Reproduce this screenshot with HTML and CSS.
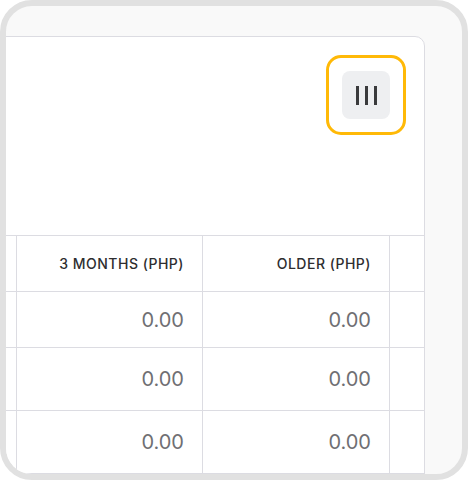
FILE: index.html
```html
<!DOCTYPE html>
<html>
<head>
<meta charset="utf-8">
<link rel="stylesheet" href="styles.css">
</head>
<body>
<div class="frame">
  <div class="card">
    <div class="card-head">
      <div class="col-toggle">
        <button class="col-btn" aria-label="Columns">
          <span class="bar"></span><span class="bar"></span><span class="bar"></span>
        </button>
      </div>
    </div>
    <div class="table">
      <div class="row head">
        <div class="cell"></div>
        <div class="cell">3 MONTHS (PHP)</div>
        <div class="cell">OLDER (PHP)</div>
        <div class="cell"></div>
      </div>
      <div class="row first">
        <div class="cell val"></div>
        <div class="cell val">0.00</div>
        <div class="cell val">0.00</div>
        <div class="cell"></div>
      </div>
      <div class="row">
        <div class="cell val"></div>
        <div class="cell val">0.00</div>
        <div class="cell val">0.00</div>
        <div class="cell"></div>
      </div>
      <div class="row">
        <div class="cell val"></div>
        <div class="cell val">0.00</div>
        <div class="cell val">0.00</div>
        <div class="cell"></div>
      </div>
    </div>
  </div>
</div>
</body>
</html>
```

FILE: styles.css
```css
* { box-sizing: border-box; }
html, body { margin: 0; padding: 0; background: #ffffff; }
body { width: 468px; height: 480px; overflow: hidden; font-family: "Inter", "Liberation Sans", sans-serif; }

.frame {
  width: 468px;
  height: 480px;
  border: 6px solid #e1e1e1;
  border-radius: 32px;
  background: #f9f9f9;
  overflow: hidden;
  padding-top: 30px;
}

.card {
  margin-left: -194px;
  margin-right: 37px;
  background: #ffffff;
  border: 1px solid #dcdce2;
  border-radius: 10px;
  height: 480px;
}

.card-head {
  height: 198px;
  display: flex;
  justify-content: flex-end;
  align-items: flex-start;
  padding: 18px 18px 0 0;
}

.col-toggle {
  width: 80px;
  height: 80px;
  border: 3px solid #ffb907;
  border-radius: 15px;
  display: flex;
  align-items: center;
  justify-content: center;
}

.col-btn {
  width: 48px;
  height: 48px;
  border: none;
  border-radius: 8px;
  background: #eeeff1;
  display: flex;
  align-items: center;
  justify-content: center;
  gap: 6px;
  padding: 0;
}

.bar {
  width: 3px;
  height: 19px;
  background: #3a3a3c;
}

.table { border-top: 1px solid #dcdce2; }

.row {
  display: grid;
  grid-template-columns: 204px 186px 187px 1fr;
  height: 63px;
  border-bottom: 1px solid #dcdce2;
}
.row.head, .row.first { height: 56px; }

.cell {
  border-right: 1px solid #dcdce2;
  display: flex;
  align-items: center;
  justify-content: flex-end;
  padding-right: 18px;
}
.cell:last-child { border-right: none; }

.head .cell {
  font-size: 14px;
  font-weight: 500;
  color: #2e2e30;
  letter-spacing: 0.5px;
}

.val {
  font-size: 20px;
  font-weight: 400;
  color: #6f6f73;
}
```
